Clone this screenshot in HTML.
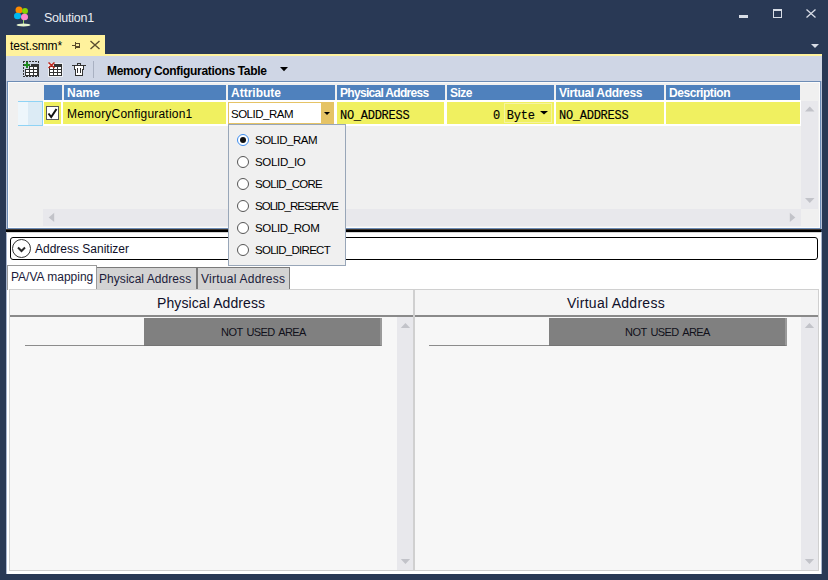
<!DOCTYPE html>
<html><head><meta charset="utf-8">
<style>
*{margin:0;padding:0;box-sizing:border-box}
html,body{width:828px;height:580px;overflow:hidden;background:#293955;font-family:"Liberation Sans",sans-serif;font-size:12px;color:#000;position:relative}
.a{position:absolute}
.t{position:absolute;white-space:nowrap;line-height:1}
.hd{position:absolute;top:85px;height:15px;background:#4f81bd;color:#fff;font-weight:bold;font-size:12px;line-height:17px;padding-left:3px;white-space:nowrap;overflow:hidden;letter-spacing:-0.3px}
.cl{position:absolute;top:102px;height:22px;background:#f0f060}
.mono{font-family:"Liberation Mono",monospace;font-size:12px;letter-spacing:-0.27px;-webkit-text-stroke:0.15px #000}
.rad{position:absolute;left:237px;width:12px;height:12px;border-radius:50%;border:1px solid #555;background:#fff}
.rt{position:absolute;left:255px;white-space:nowrap;line-height:1;font-size:11.5px}
.sbv{position:absolute;background:#e8e8ec}
</style></head><body>
<!-- title bar -->
<svg class="a" style="left:0;top:0" width="828" height="56">
  <ellipse cx="19" cy="10" rx="3.5" ry="3.5" fill="#ff8a00"/>
  <ellipse cx="25" cy="11" rx="3" ry="3" fill="#88d400"/>
  <ellipse cx="17.5" cy="16" rx="3.5" ry="3.2" fill="#00b8f0"/>
  <ellipse cx="24.5" cy="17" rx="3.5" ry="3.2" fill="#ff88cc"/>
  <rect x="23" y="20" width="1" height="5" fill="#9bd36a"/>
  <ellipse cx="23.5" cy="25" rx="7" ry="1.4" fill="#e6f5cf"/>
  <rect x="739" y="15" width="9" height="3" fill="#d8dde6"/>
  <rect x="773.5" y="9.5" width="8" height="8" fill="none" stroke="#d8dde6" stroke-width="1"/>
  <rect x="773" y="9" width="9" height="2" fill="#d8dde6"/>
  <path d="M806.5 9.5 L815.5 17.5 M815.5 9.5 L806.5 17.5" stroke="#d8dde6" stroke-width="1.3"/>
  <path d="M811 44 L819 44 L815 48 Z" fill="#d8dde6"/>
</svg>
<div class="t" style="left:44px;top:12px;font-size:12.5px;letter-spacing:-0.25px;color:#e8ecf2">Solution1</div>

<!-- doc tab -->
<div class="a" style="left:6px;top:35px;width:99px;height:21px;background:#fff29d"></div>
<div class="t" style="left:10px;top:40px;font-size:12px;letter-spacing:-0.15px;color:#000">test.smm*</div>
<svg class="a" style="left:68px;top:38px" width="36" height="16">
  <g fill="#5b4b2a" shape-rendering="crispEdges">
   <rect x="4" y="7" width="4" height="1"/>
   <rect x="7" y="4" width="1" height="7"/>
   <rect x="8" y="5" width="4" height="1"/>
   <rect x="11" y="5" width="1" height="5"/>
   <rect x="8" y="8" width="4" height="2"/>
  </g>
  <path d="M22.5 3 L31.5 11 M31.5 3 L22.5 11" stroke="#5a4d30" stroke-width="1.4"/>
</svg>

<!-- main panel -->
<div class="a" style="left:6px;top:54px;width:816px;height:2px;background:#fff29d"></div>
<div class="a" style="left:6px;top:56px;width:816px;height:25px;background:#cfd6e5"></div>
<!-- toolbar icons -->
<svg class="a" style="left:0;top:56px" width="100" height="25" shape-rendering="crispEdges">
  <g transform="translate(0,-56)">
  <!-- add table -->
  <path d="M23 61.5 H39 M23 76.5 H39" stroke="#333" stroke-dasharray="2,1" fill="none"/>
  <path d="M23.5 61 V77 M38.5 61 V77" stroke="#333" stroke-dasharray="2,1" fill="none"/>
  <rect x="31" y="64" width="8" height="2" fill="#333"/>
  <rect x="25" y="69" width="14" height="7" fill="#333"/>
  <rect x="29" y="66" width="10" height="3" fill="#333"/>
  <g fill="#fff">
   <rect x="30" y="67" width="3" height="2"/><rect x="34" y="67" width="3" height="2"/>
   <rect x="26" y="70" width="3" height="2"/><rect x="30" y="70" width="3" height="2"/><rect x="34" y="70" width="3" height="2"/>
   <rect x="26" y="73" width="3" height="2"/><rect x="30" y="73" width="3" height="2"/><rect x="34" y="73" width="3" height="2"/>
  </g>
  <rect x="24" y="64" width="6" height="2" fill="#1f8a1f"/>
  <rect x="26" y="62" width="2" height="6" fill="#1f8a1f"/>
  <!-- del table -->
  <rect x="48" y="63" width="15" height="14" fill="#fff" opacity="0.6"/>
  <rect x="54" y="64" width="8" height="2" fill="#333"/>
  <rect x="49" y="66" width="13" height="10" fill="#333"/>
  <g fill="#fff">
   <rect x="50" y="67" width="3" height="2"/><rect x="54" y="67" width="3" height="2"/><rect x="58" y="67" width="3" height="2"/>
   <rect x="50" y="70" width="3" height="2"/><rect x="54" y="70" width="3" height="2"/><rect x="58" y="70" width="3" height="2"/>
   <rect x="50" y="73" width="3" height="2"/><rect x="54" y="73" width="3" height="2"/><rect x="58" y="73" width="3" height="2"/>
  </g>
  <path d="M48.5 62.5 L54.5 68 M54.5 62.5 L48.5 68" stroke="#c0281e" stroke-width="1.6" shape-rendering="auto"/>
  <!-- trash -->
  <rect x="72" y="65" width="14" height="1" fill="#333"/>
  <path d="M77.5 65 V63.5 H80.5 V65" stroke="#333" fill="none"/>
  <path d="M74.5 66 V69.5 H75.5 V75.5 H82.5 V69.5 H83.5 V66" stroke="#333" fill="#fff"/>
  <rect x="77" y="68" width="1" height="5" fill="#333"/>
  <rect x="80" y="68" width="1" height="5" fill="#333"/>
  <rect x="93" y="61" width="1" height="17" fill="#a9b1c2"/>
  </g>
</svg>
<div class="t" style="left:107px;top:65px;font-weight:bold;font-size:12px;letter-spacing:-0.33px;color:#000">Memory Configurations Table</div>
<svg class="a" style="left:278px;top:64px" width="12" height="10"><path d="M2 3 H10 L6 7.3 Z" fill="#000"/></svg>

<!-- upper content -->
<div class="a" style="left:6px;top:81px;width:816px;height:148px;background:#b5c0d6"></div>
<div class="a" style="left:7px;top:81px;width:814px;height:148px;background:#6d8cb5"></div>
<div class="a" style="left:8px;top:82px;width:812px;height:146px;background:#fbfbfb"></div>
<div class="a" style="left:9px;top:83px;width:810px;height:144px;background:#f0f0f0"></div>

<!-- grid header -->
<div class="hd" style="left:44px;width:18px"></div>
<div class="hd" style="left:64px;width:162px;letter-spacing:0px">Name</div>
<div class="hd" style="left:228px;width:107px;letter-spacing:0px">Attribute</div>
<div class="hd" style="left:337px;width:108px;letter-spacing:-0.7px">Physical Address</div>
<div class="hd" style="left:447px;width:107px;letter-spacing:-0.5px">Size</div>
<div class="hd" style="left:556px;width:108px;letter-spacing:-0.33px">Virtual Address</div>
<div class="hd" style="left:666px;width:134px;letter-spacing:-0.45px">Description</div>

<!-- row header -->
<div class="a" style="left:18px;top:101px;width:25px;height:25px;border:1px solid #8fd3f5;border-left:0;background:linear-gradient(90deg,#eef6fb 0,#eef6fb 10px,#dcebf5 10px)"></div>
<div class="a" style="left:43px;top:100px;width:758px;height:26px;background:#fff"></div>
<div class="cl" style="left:44px;width:17px"></div>
<div class="a" style="left:46px;top:106px;width:13px;height:14px;border:1px solid #555;background:#fff"></div>
<svg class="a" style="left:46px;top:106px" width="13" height="14"><path d="M2.5 7.5 L5.2 11 L10.5 3" stroke="#111" stroke-width="2" fill="none"/></svg>
<div class="cl" style="left:63px;width:163px"></div>
<div class="t" style="left:67px;top:108px;font-size:12px;letter-spacing:0.2px">MemoryConfiguration1</div>
<div class="cl" style="left:337px;width:107px"></div>
<div class="t mono" style="left:340px;top:110px">NO_ADDRESS</div>
<div class="cl" style="left:447px;width:107px"></div>
<div class="a" style="left:504px;top:103px;width:48px;height:20px;border:1px solid #f6f3a0"></div>
<div class="t mono" style="left:493px;top:110px">0 Byte</div>
<svg class="a" style="left:538px;top:109px" width="12" height="8"><path d="M2 2 H10 L6 5.5 Z" fill="#000"/></svg>
<div class="cl" style="left:556px;width:108px"></div>
<div class="t mono" style="left:559px;top:110px">NO_ADDRESS</div>
<div class="cl" style="left:666px;width:134px"></div>
<!-- combo -->
<div class="a" style="left:228px;top:102px;width:106px;height:22px;border:1px solid #e5c365;background:#fff"></div>
<div class="a" style="left:321px;top:103px;width:12px;height:20px;background:#e5c365"></div>
<svg class="a" style="left:321px;top:108px" width="12" height="8"><path d="M3 4 H9 L6 7 Z" fill="#000"/></svg>
<div class="t" style="left:231px;top:109px;font-size:11.5px;letter-spacing:-0.5px">SOLID_RAM</div>

<!-- scrollbars upper -->
<div class="sbv" style="left:801px;top:101px;width:17px;height:108px"></div>
<svg class="a" style="left:801px;top:101px" width="17" height="108"><path d="M4 10.5 L8.75 5.5 L13.5 10.5 Z" fill="#c2c3c9"/><path d="M4 97 L13.5 97 L8.75 102 Z" fill="#c2c3c9"/></svg>
<div class="sbv" style="left:43px;top:209px;width:758px;height:17px"></div>
<svg class="a" style="left:43px;top:209px" width="758" height="17"><path d="M11.2 3.7 L11.2 13.1 L5.7 8.4 Z" fill="#c2c3c9"/><path d="M746.8 3.7 L746.8 13.1 L752.3 8.4 Z" fill="#c2c3c9"/></svg>

<!-- splitter -->
<div class="a" style="left:6px;top:229px;width:815px;height:1px;background:#3a3430"></div><div class="a" style="left:6px;top:230px;width:815px;height:2px;background:#000"></div>

<!-- lower -->
<div class="a" style="left:6px;top:232px;width:816px;height:342px;background:#a9b6cf"></div><div class="a" style="left:7px;top:232px;width:814px;height:342px;background:#fff"></div><div class="a" style="left:6px;top:232px;width:815px;height:1px;background:#d4d4d4"></div>
<div class="a" style="left:10px;top:237px;width:808px;height:23px;border:1px solid #000;border-radius:3px;background:#fff"></div>
<svg class="a" style="left:11px;top:238px" width="22" height="22"><circle cx="10.5" cy="10.5" r="9" fill="none" stroke="#333" stroke-width="1"/><path d="M7 9.5 L10.5 13 L14 9.5" stroke="#2a2a2a" stroke-width="2" fill="none"/></svg>
<div class="t" style="left:35px;top:243px;font-size:12px;color:#10102a">Address Sanitizer</div>

<!-- tabs -->
<div class="a" style="left:96px;top:267px;width:101px;height:22px;background:#d3d3d3;border:1px solid #7a7a7a;border-bottom:0"></div>
<div class="a" style="left:197px;top:267px;width:93px;height:22px;background:#d3d3d3;border:1px solid #7a7a7a;border-bottom:0"></div>
<div class="a" style="left:7px;top:265px;width:90px;height:25px;background:#fff;border:1px solid #9a9a9a;border-bottom:0"></div>
<div class="t" style="left:11px;top:271px;font-size:12px;color:#1b1b3a">PA/VA mapping</div>
<div class="t" style="left:99px;top:273px;font-size:12px;color:#1b1b3a;letter-spacing:0.05px">Physical Address</div>
<div class="t" style="left:201px;top:273px;font-size:12px;color:#1b1b3a;letter-spacing:0.25px">Virtual Address</div>

<!-- panels -->
<div class="a" style="left:9px;top:289px;width:810px;height:282px;background:#f7f7f7;border:1px solid #d0d0d0"></div>
<div class="a" style="left:10px;top:290px;width:403px;height:25px;background:#f5f5f5"></div>
<div class="a" style="left:10px;top:315px;width:403px;height:2px;background:#8a8a8a"></div>
<div class="a" style="left:413px;top:290px;width:2px;height:280px;background:#d0d0d0"></div>
<div class="a" style="left:415px;top:290px;width:403px;height:25px;background:#f5f5f5"></div>
<div class="a" style="left:415px;top:315px;width:403px;height:2px;background:#8a8a8a"></div>
<div class="t" style="left:157px;top:296px;font-size:14px;letter-spacing:0.1px;color:#10102a">Physical Address</div>
<div class="t" style="left:567px;top:296px;font-size:14px;letter-spacing:0.27px;color:#10102a">Virtual Address</div>

<div class="a" style="left:144px;top:318px;width:238px;height:28px;background:#808080;border-right:2px solid #9a9a9a;border-bottom:1px solid #747474"></div>
<div class="a" style="left:25px;top:345px;width:119px;height:1px;background:#8c8c8c"></div>
<div class="t" style="left:221px;top:327px;font-size:11px;letter-spacing:-0.55px;word-spacing:1.5px;color:#10101a">NOT USED AREA</div>
<div class="a" style="left:549px;top:318px;width:238px;height:28px;background:#808080;border-right:2px solid #9a9a9a;border-bottom:1px solid #747474"></div>
<div class="a" style="left:429px;top:345px;width:120px;height:1px;background:#8c8c8c"></div>
<div class="t" style="left:625px;top:327px;font-size:11px;letter-spacing:-0.55px;word-spacing:1.5px;color:#10101a">NOT USED AREA</div>

<div class="sbv" style="left:397px;top:317px;width:16px;height:253px"></div>
<svg class="a" style="left:397px;top:317px" width="16" height="253"><path d="M3.8 11 L8.45 6 L13.1 11 Z" fill="#c2c3c9"/><path d="M3.8 242 L13.1 242 L8.45 247 Z" fill="#c2c3c9"/></svg>
<div class="sbv" style="left:801px;top:317px;width:17px;height:253px"></div>
<svg class="a" style="left:801px;top:317px" width="17" height="253"><path d="M3.8 11 L8.45 6 L13.1 11 Z" fill="#c2c3c9"/><path d="M3.8 242 L13.1 242 L8.45 247 Z" fill="#c2c3c9"/></svg>

<!-- dropdown popup -->
<div class="a" style="left:228px;top:124px;width:118px;height:142px;background:#f0f0f0;border:1px solid #98a6b8"></div>
<div class="rad" style="top:134px;border-color:#3c8cf0"></div>
<div class="a" style="left:240px;top:137px;width:6px;height:6px;border-radius:50%;background:#111"></div>
<div class="rt" style="top:135px;letter-spacing:-0.5px">SOLID_RAM</div>
<div class="rad" style="top:156px"></div>
<div class="rt" style="top:157px;letter-spacing:-0.33px">SOLID_IO</div>
<div class="rad" style="top:178px"></div>
<div class="rt" style="top:179px;letter-spacing:-0.71px">SOLID_CORE</div>
<div class="rad" style="top:200px"></div>
<div class="rt" style="top:201px;letter-spacing:-0.98px">SOLID_RESERVE</div>
<div class="rad" style="top:222px"></div>
<div class="rt" style="top:223px;letter-spacing:-0.37px">SOLID_ROM</div>
<div class="rad" style="top:244px"></div>
<div class="rt" style="top:245px;letter-spacing:-0.73px">SOLID_DIRECT</div>
</body></html>
